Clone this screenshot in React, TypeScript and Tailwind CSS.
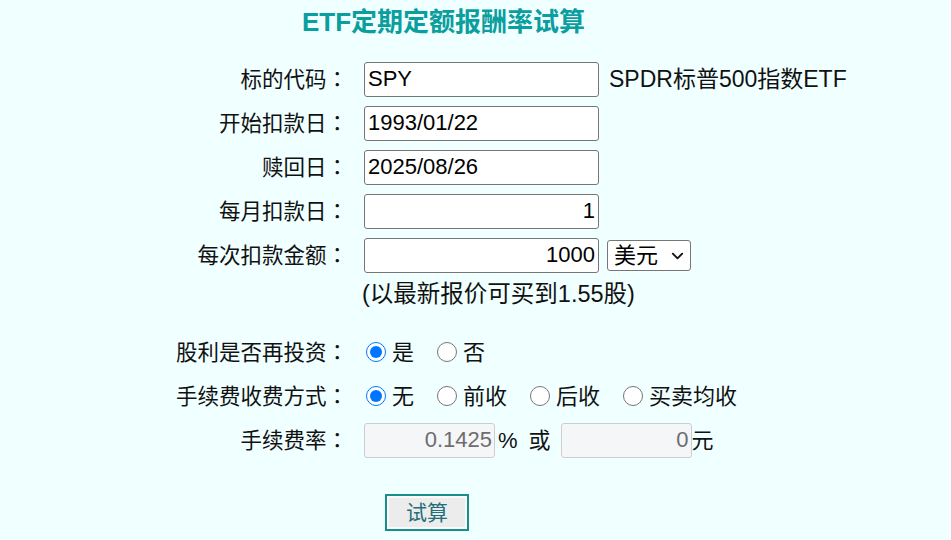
import React from "react";

const FONT = "font-['Liberation_Sans','Noto_Sans_CJK_SC',sans-serif]";

function Row({ label, children, className = "" }: { label: string; children?: React.ReactNode; className?: string }) {
  return (
    <div className={`flex h-[44px] items-center ${className}`}>
      <div className="w-[348px] shrink-0 text-right text-[21.5px] text-[#111]">
        {label}
        {/* TC font centres the full-width colon like the original */}
        <span className="font-['Noto_Sans_CJK_TC',sans-serif]">：</span>
      </div>
      <div className="ml-[16px] flex items-center">{children}</div>
    </div>
  );
}

function TextBox({ value, right = false }: { value: string; right?: boolean }) {
  return (
    <input
      readOnly
      value={value}
      className={`h-[35px] w-[235px] rounded-[3px] border border-[#767676] bg-white px-[3px] text-[22px] text-black outline-none ${
        right ? "text-right" : ""
      }`}
    />
  );
}

function Radio({ label, checked = false }: { label: string; checked?: boolean }) {
  return (
    <label className="mr-[21px] flex items-center">
      <input type="radio" defaultChecked={checked} name={label} className="ml-[2px] h-[20px] w-[20px]" />
      <span className="ml-[6px] text-[22px] text-[#111]">{label}</span>
    </label>
  );
}

function FeeBox({ value }: { value: string }) {
  return (
    <input
      readOnly
      disabled
      value={value}
      className="h-[35px] w-[131px] rounded-[3px] border border-[#cdcdcd] bg-[#f5f6f7] px-[2px] text-right text-[22px] text-[#6d6d6d]"
    />
  );
}

export default function App() {
  return (
    <div className={`min-h-screen bg-[#f0ffff] ${FONT}`}>
      <h1 className="pl-[302px] pt-[4px] text-[26px] leading-[36px] font-bold text-[#0b9e9e]">
        ETF定期定额报酬率试算
      </h1>

      <div className="mt-[17px]">
        <Row label="标的代码">
          <TextBox value="SPY" />
          <span className="ml-[10px] text-[23px] text-[#111]">SPDR标普500指数ETF</span>
        </Row>
        <Row label="开始扣款日">
          <TextBox value="1993/01/22" />
        </Row>
        <Row label="赎回日">
          <TextBox value="2025/08/26" />
        </Row>
        <Row label="每月扣款日">
          <TextBox value="1" right />
        </Row>
        <Row label="每次扣款金额">
          <TextBox value="1000" right />
          <div className="relative ml-[8px]">
            <select
              defaultValue="usd"
              className="h-[31px] w-[84px] appearance-none rounded-[3px] border border-[#767676] bg-white pl-[6px] text-[22px] leading-[29px] text-black"
            >
              <option value="usd">美元</option>
              <option value="twd">台币</option>
            </select>
            <svg
              viewBox="0 0 16 16"
              className="pointer-events-none absolute right-[6px] top-[8px] h-[15px] w-[15px]"
              fill="none"
              stroke="#111"
              strokeWidth="2"
              strokeLinecap="round"
              strokeLinejoin="round"
            >
              <path d="M3 6l5 5 5-5" />
            </svg>
          </div>
        </Row>
        <div className="flex h-[36px] items-center pl-[362px] text-[23.5px] text-[#111]">(以最新报价可买到1.55股)</div>

        <Row label="股利是否再投资" className="mt-[17px]">
          <Radio label="是" checked />
          <Radio label="否" />
        </Row>
        <Row label="手续费收费方式">
          <Radio label="无" checked />
          <Radio label="前收" />
          <Radio label="后收" />
          <Radio label="买卖均收" />
        </Row>
        <Row label="手续费率">
          <FeeBox value="0.1425" />
          <span className="ml-[3px] text-[22px] text-[#111]">%</span>
          <span className="ml-[11px] text-[22px] text-[#111]">或</span>
          <span className="ml-[10px]">
            <FeeBox value="0" />
          </span>
          <span className="text-[22px] text-[#111]">元</span>
        </Row>

        <div className="mt-[32px] pl-[385px]">
          <button className="h-[37px] w-[84px] border-2 border-[#178f8a] bg-[#ececec] text-[21px] text-[#236f79] shadow-[inset_0_0_0_2px_#fafafa]">
            试算
          </button>
        </div>
      </div>
    </div>
  );
}
